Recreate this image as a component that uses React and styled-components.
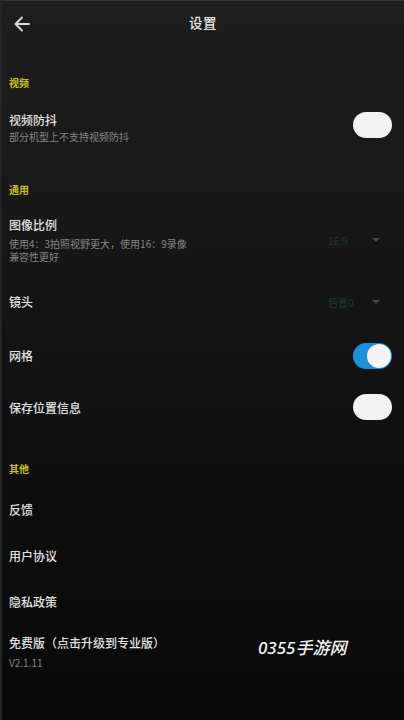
import React from "react";
import styled, { createGlobalStyle } from "styled-components";

const Global = createGlobalStyle`
  html, body { margin: 0; padding: 0; background: #0b0b0b; }
  body { font-family: "Noto Sans CJK SC", "Noto Sans", sans-serif; }
  * { box-sizing: border-box; }
`;

const Screen = styled.div`
  position: relative;
  width: 404px;
  height: 720px;
  overflow: hidden;
  background: linear-gradient(180deg, #1e1e1e 0%, #161616 35%, #0e0e0e 70%, #090909 100%);
  border-top: 1px solid #363636;
  border-left: 2px solid #252525;
  display: flex;
  flex-direction: column;
`;

const Header = styled.div`
  height: 47px;
  padding-bottom: 5px;
  display: flex;
  align-items: center;
  justify-content: center;
  position: relative;
`;

const BackButton = styled.div`
  position: absolute;
  left: 11px;
  top: 14px;
  width: 18px;
  height: 18px;
  display: flex;
`;

const Title = styled.div`
  font-size: 13.5px;
  font-weight: 500;
  color: #e4e4e4;
  letter-spacing: 0.5px;
`;

const SectionLabel = styled.div`
  height: 20px;
  line-height: 20px;
  margin-top: ${(p) => p.$top}px;
  padding-left: 7px;
  font-size: 10px;
  font-weight: 700;
  color: #c9c21c;
`;

const Row = styled.div`
  height: ${(p) => p.$h}px;
  margin-top: ${(p) => p.$top || 0}px;
  display: flex;
  align-items: center;
  justify-content: space-between;
  padding: 0 12px 0 7px;
`;

const Texts = styled.div`
  display: flex;
  flex-direction: column;
`;

const RowTitle = styled.div`
  font-size: 12px;
  line-height: 20px;
  font-weight: 500;
  color: #e2e2e2;
`;

const RowSub = styled.div`
  font-size: 10px;
  line-height: ${(p) => p.$lh || 14}px;
  margin-top: ${(p) => p.$mt || 0}px;
  color: #868686;
  max-width: 182px;
`;

const Toggle = styled.div`
  width: 39px;
  height: 26px;
  border-radius: 13px;
  background: ${(p) => (p.$on ? "#1b8fd8" : "#f2f2f2")};
  display: flex;
  align-items: center;
  justify-content: flex-end;
  padding: 1px;
  margin-top: ${(p) => p.$mt || 0}px;
`;

const Knob = styled.div`
  width: 24px;
  height: 24px;
  border-radius: 50%;
  background: #f4f4f4;
`;

const Picker = styled.div`
  display: flex;
  align-items: center;
  gap: 17px;
  margin-right: 12px;
  margin-top: ${(p) => p.$mt || 0}px;
`;

const PickerValue = styled.div`
  font-size: 10px;
  color: #1f3b31;
  width: 27px;
`;

const Caret = styled.div`
  width: 0;
  height: 0;
  border-left: 4px solid transparent;
  border-right: 4px solid transparent;
  border-top: 4px solid #4a4a4a;
`;

const Watermark = styled.div`
  position: absolute;
  left: 256px;
  top: 636px;
  font-family: "Noto Sans", "Noto Sans CJK SC", sans-serif;
  font-style: italic;
  font-weight: 500;
  font-size: 17px;
  line-height: 22px;
  color: #f4f4f4;
`;

export default function App() {
  return (
    <>
      <Global />
      <Screen>
        <Header>
          <BackButton>
            <svg width="18" height="18" viewBox="0 0 18 18" fill="none">
              <path d="M16 9H3M9 2.5L2.5 9L9 15.5" stroke="#dcdcdc" strokeWidth="1.8" strokeLinecap="round" strokeLinejoin="round" />
            </svg>
          </BackButton>
          <Title>设置</Title>
        </Header>

        <SectionLabel $top={25}>视频</SectionLabel>
        <Row $h={68}>
          <Texts>
            <RowTitle>视频防抖</RowTitle>
            <RowSub>部分机型上不支持视频防抖</RowSub>
          </Texts>
          <Toggle $mt={-4} />
        </Row>

        <SectionLabel $top={19}>通用</SectionLabel>
        <Row $h={78}>
          <Texts>
            <RowTitle>图像比例</RowTitle>
            <RowSub $lh={13} $mt={2}>使用4：3拍照视野更大，使用16：9录像兼容性更好</RowSub>
          </Texts>
          <Picker $mt={2}>
            <PickerValue>16:9</PickerValue>
            <Caret />
          </Picker>
        </Row>
        <Row $h={48}>
          <RowTitle>镜头</RowTitle>
          <Picker>
            <PickerValue>后置0</PickerValue>
            <Caret />
          </Picker>
        </Row>
        <Row $h={60}>
          <RowTitle>网格</RowTitle>
          <Toggle $on>
            <Knob />
          </Toggle>
        </Row>
        <Row $h={44}>
          <RowTitle>保存位置信息</RowTitle>
          <Toggle $mt={-2} />
        </Row>

        <SectionLabel $top={29}>其他</SectionLabel>
        <Row $h={46} $top={8}>
          <RowTitle>反馈</RowTitle>
        </Row>
        <Row $h={46}>
          <RowTitle>用户协议</RowTitle>
        </Row>
        <Row $h={46}>
          <RowTitle>隐私政策</RowTitle>
        </Row>
        <Row $h={53}>
          <Texts>
            <RowTitle>免费版（点击升级到专业版）</RowTitle>
            <RowSub $mt={3}>V2.1.11</RowSub>
          </Texts>
        </Row>

        <Watermark>0355手游网</Watermark>
      </Screen>
    </>
  );
}
